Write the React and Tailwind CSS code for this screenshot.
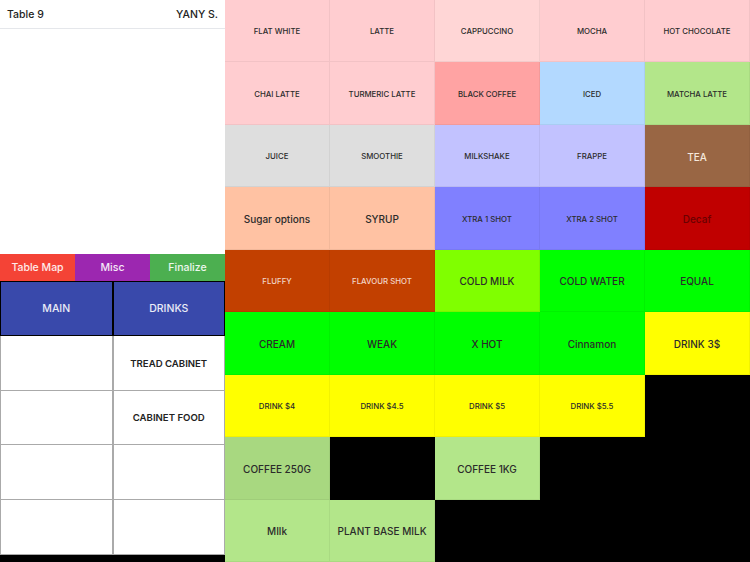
import React from 'react'

// s = small label, b = big label
const ITEMS = [
    ['FLAT WHITE', 'bg-[#ffcdd0]', 's'],
    ['LATTE', 'bg-[#ffcdd0]', 's'],
    ['CAPPUCCINO', 'bg-[#ffd6d6]', 's'],
    ['MOCHA', 'bg-[#ffcdd0]', 's'],
    ['HOT CHOCOLATE', 'bg-[#ffcdd0]', 's'],
    ['CHAI LATTE', 'bg-[#ffcdd0]', 's'],
    ['TURMERIC LATTE', 'bg-[#ffcdd0]', 's'],
    ['BLACK COFFEE', 'bg-[#ffa3a3]', 's'],
    ['ICED', 'bg-[#b3d9ff]', 's'],
    ['MATCHA LATTE', 'bg-[#b3e68a]', 's'],
    ['JUICE', 'bg-[#dedede]', 's'],
    ['SMOOTHIE', 'bg-[#dedede]', 's'],
    ['MILKSHAKE', 'bg-[#c2c2ff]', 's'],
    ['FRAPPE', 'bg-[#c2c2ff]', 's'],
    ['TEA', 'bg-[#996644]', 'b', 'text-[#f5e8dc]'],
    ['Sugar options', 'bg-[#ffc2a3]', 'b'],
    ['SYRUP', 'bg-[#ffc2a3]', 'b'],
    ['XTRA 1 SHOT', 'bg-[#8080ff]', 's'],
    ['XTRA 2 SHOT', 'bg-[#8080ff]', 's'],
    ['Decaf', 'bg-[#c00000]', 'b', 'text-[#6a0000]'],
    ['FLUFFY', 'bg-[#c24000]', 's', 'text-[#f3d6c8]'],
    ['FLAVOUR SHOT', 'bg-[#c24000]', 's', 'text-[#f3d6c8]'],
    ['COLD MILK', 'bg-[#80ff00]', 'b'],
    ['COLD WATER', 'bg-[#00ff00]', 'b'],
    ['EQUAL', 'bg-[#00ff00]', 'b'],
    ['CREAM', 'bg-[#00ff00]', 'b'],
    ['WEAK', 'bg-[#00ff00]', 'b'],
    ['X HOT', 'bg-[#00ff00]', 'b'],
    ['Cinnamon', 'bg-[#00ff00]', 'b'],
    ['DRINK 3$', 'bg-[#ffff00]', 'b'],
    ['DRINK $4', 'bg-[#ffff00]', 's'],
    ['DRINK $4.5', 'bg-[#ffff00]', 's'],
    ['DRINK $5', 'bg-[#ffff00]', 's'],
    ['DRINK $5.5', 'bg-[#ffff00]', 's'],
    null,
    ['COFFEE 250G', 'bg-[#a8d880]', 'b'],
    null,
    ['COFFEE 1KG', 'bg-[#b3e68a]', 'b'],
    null,
    null,
    ['MIlk', 'bg-[#b3e68a]', 'b'],
    ['PLANT BASE MILK', 'bg-[#b3e68a]', 'b'],
    null,
    null,
    null,
]

const CATEGORIES = [
    ['MAIN', true],
    ['DRINKS', true],
    ['', false],
    ['TREAD CABINET', false],
    ['', false],
    ['CABINET FOOD', false],
    ['', false],
    ['', false],
    ['', false],
    ['', false],
]

const ItemCell = ({ item }) => {
    if (!item) return <div className="bg-black" />
    const [label, bg, size, color] = item
    return (
        <div
            className={`${bg} flex items-center justify-center pt-[3px] border-r border-b border-black/5 text-center font-medium ${
                size === 'b' ? 'text-[10px]' : 'text-[7.8px]'
            } ${color || 'text-[#2b2b2b]'}`}
        >
            {label}
        </div>
    )
}

const App = () => {
    return (
        <div className="flex w-[750px] h-[562px] overflow-hidden bg-white" style={{ fontFamily: 'Inter, "Liberation Sans", sans-serif' }}>
            {/* Left panel */}
            <div className="w-[225px] flex flex-col">
                <div className="h-[29px] flex items-center justify-between px-[7px] pt-[1px] border-b border-gray-200 text-[10.5px] font-medium text-[#222]">
                    <span>Table 9</span>
                    <span>YANY S.</span>
                </div>
                <div className="flex-1" />
                <div className="grid grid-cols-3 h-[27px] text-[10.5px] font-medium text-white/90">
                    <div className="bg-[#f44336] flex items-center justify-center">Table Map</div>
                    <div className="bg-[#9c27b0] flex items-center justify-center">Misc</div>
                    <div className="bg-[#4caf50] flex items-center justify-center">Finalize</div>
                </div>
                <div className="grid grid-cols-2 grid-rows-5 h-[274px] text-[9.6px] font-semibold">
                    {CATEGORIES.map(([label, active], i) =>
                        active ? (
                            <div key={i} className="bg-[#3949ab] border border-black flex items-center justify-center text-white/90 font-medium text-[10.5px]">
                                {label}
                            </div>
                        ) : (
                            <div key={i} className="border-r border-b border-l border-[#aaa] flex items-center justify-center pt-[2px] text-[#222]">
                                {label}
                            </div>
                        )
                    )}
                </div>
                <div className="h-[7px] bg-black" />
            </div>

            {/* Items grid */}
            <div className="flex-1 grid grid-cols-5 grid-rows-9 h-[562px]">
                {ITEMS.map((item, i) => (
                    <ItemCell key={i} item={item} />
                ))}
            </div>
        </div>
    )
}

export default App
